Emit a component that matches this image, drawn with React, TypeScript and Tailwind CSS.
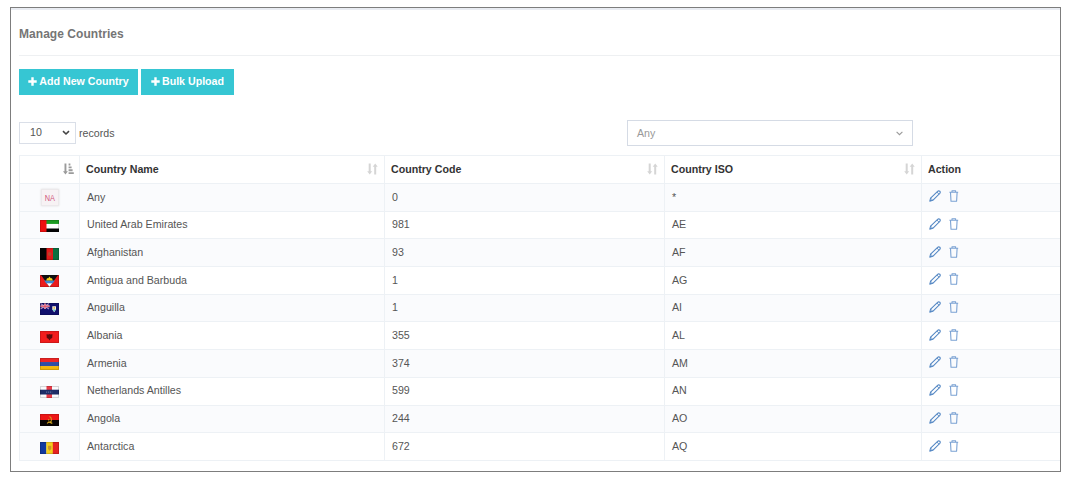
import type { ReactNode } from "react";

type Country = { flag: ReactNode; name: string; code: string; iso: string };

function Flag({ children }: { children: ReactNode }) {
  return (
    <svg width="19" height="12" viewBox="0 0 19 11" preserveAspectRatio="none" className="mt-[2px] block">
      {children}
      <rect x="0.5" y="0.5" width="18" height="10" fill="none" stroke="#000" strokeOpacity="0.15" />
    </svg>
  );
}

const countries: Country[] = [
  {
    flag: (
      <span className="mt-px flex h-[17px] w-[18px] items-center justify-center border border-[#ece9eb] bg-[#f7f2f4] text-[8.5px] leading-none text-[#d0527c] shadow-[0_0_2px_#e0dddf]">
        <span className="scale-x-[.86]">NA</span>
      </span>
    ),
    name: "Any",
    code: "0",
    iso: "*",
  },
  {
    flag: (
      <Flag>
        <rect width="19" height="4" fill="#1c9c22" />
        <rect y="3.6" width="19" height="4.4" fill="#fff" />
        <rect y="7.8" width="19" height="3.2" fill="#050505" />
        <rect width="6.5" height="11" fill="#f01010" />
      </Flag>
    ),
    name: "United Arab Emirates",
    code: "981",
    iso: "AE",
  },
  {
    flag: (
      <Flag>
        <rect width="7" height="11" fill="#050505" />
        <rect x="6.5" width="6.5" height="11" fill="#e01a1a" />
        <rect x="13" width="6" height="11" fill="#0c7040" />
        <circle cx="9.7" cy="5.5" r="1.8" fill="#b8442c" />
      </Flag>
    ),
    name: "Afghanistan",
    code: "93",
    iso: "AF",
  },
  {
    flag: (
      <Flag>
        <rect width="19" height="11" fill="#ec1c1c" />
        <path d="M1 0H18L9.5 11Z" fill="#111" />
        <path d="M4.2 5H14.8L12.5 8H6.5Z" fill="#3f86d2" />
        <path d="M6.8 7.6H12.2L9.5 11Z" fill="#fff" />
        <path d="M6.2 5L7 3L8.3 3L9.5 1.3L10.7 3L12 3L12.8 5Z" fill="#f5d51c" />
      </Flag>
    ),
    name: "Antigua and Barbuda",
    code: "1",
    iso: "AG",
  },
  {
    flag: (
      <Flag>
        <rect width="19" height="11" fill="#10106e" />
        <path d="M0.5 0.5L9 5.5M9 0.5L0.5 5.5" stroke="#b292c4" strokeWidth="1" />
        <path d="M5 0.5V5.5M0.5 3H9.5" stroke="#ecc9d6" strokeWidth="1.8" />
        <path d="M5 0.5V5.5M0.5 3H9.5" stroke="#e0455c" strokeWidth="1" />
        <path d="M12.3 3H16V6L14.2 8.5L12.3 6Z" fill="#f2f3df" />
        <path d="M12.6 6H15.7L14.2 8Z" fill="#54bdca" />
        <circle cx="14.2" cy="4.5" r="0.8" fill="#e5a83b" />
      </Flag>
    ),
    name: "Anguilla",
    code: "1",
    iso: "AI",
  },
  {
    flag: (
      <Flag>
        <rect width="19" height="11" fill="#f21d1d" />
        <path d="M6.5 3L8.5 3.2L9.5 2.7L10.5 3.2L12.5 3L12.2 6.5L10.6 7L9.5 8.7L8.4 7L6.8 6.5Z" fill="#5b0a0c" />
      </Flag>
    ),
    name: "Albania",
    code: "355",
    iso: "AL",
  },
  {
    flag: (
      <Flag>
        <rect width="19" height="4" fill="#ee2525" />
        <rect y="3.7" width="19" height="4" fill="#304ea6" />
        <rect y="7.4" width="19" height="3.6" fill="#f5b90c" />
      </Flag>
    ),
    name: "Armenia",
    code: "374",
    iso: "AM",
  },
  {
    flag: (
      <Flag>
        <rect width="19" height="11" fill="#fbfbfd" />
        <rect x="6.5" width="5.5" height="11" fill="#e93a46" />
        <rect y="3.4" width="19" height="4.4" fill="#1d2c66" />
        <path d="M6.2 5.6H12.4" stroke="#6c78a8" strokeDasharray="1 1" />
      </Flag>
    ),
    name: "Netherlands Antilles",
    code: "599",
    iso: "AN",
  },
  {
    flag: (
      <Flag>
        <rect width="19" height="5.5" fill="#ee1616" />
        <rect y="5.5" width="19" height="5.5" fill="#080404" />
        <path d="M9.5 2.3C12 3.3 12 6.5 10 8M7 8.6L9 7.3L12.3 8.6M8.7 4.5V6" fill="none" stroke="#d4a51c" strokeWidth="1" />
      </Flag>
    ),
    name: "Angola",
    code: "244",
    iso: "AO",
  },
  {
    flag: (
      <Flag>
        <rect width="6.5" height="11" fill="#12399f" />
        <rect x="6.3" width="6.7" height="11" fill="#f6cf1d" />
        <rect x="12.8" width="6.2" height="11" fill="#e62222" />
        <path d="M8 3.5H11.3V6.5L9.6 8L8 6.5Z" fill="#c9962c" />
      </Flag>
    ),
    name: "Antarctica",
    code: "672",
    iso: "AQ",
  },
];

function Plus() {
  return (
    <svg width="9" height="9" viewBox="0 0 9 9" className="-mt-px shrink-0">
      <path d="M4.5 0.3V8.7M0.3 4.5H8.7" stroke="currentColor" strokeWidth="2.4" />
    </svg>
  );
}

function SortBoth() {
  return (
    <svg width="11" height="12" viewBox="0 0 11 12" className="shrink-0 text-[#d5d5d5]" fill="currentColor">
      <path d="M1.7 0.5H3.7V8.3H5.2L2.7 11.5L0.2 8.3H1.7Z" />
      <path d="M7.2 11.5H9.2V3.7H10.7L8.2 0.5L5.7 3.7H7.2Z" />
    </svg>
  );
}

function SortAsc() {
  return (
    <svg width="11" height="12" viewBox="0 0 11 12" className="shrink-0 text-[#9b9b9b]" fill="currentColor">
      <path d="M1.5 0.5H3.4V8.3H4.9L2.45 11.4L0 8.3H1.5Z" />
      <path d="M5.6 0.6H7.4V2.5H5.6ZM5.6 3.4H8.6V5.3H5.6ZM5.6 6.3H9.6V8.2H5.6ZM5.6 9.2H10.8V11.1H5.6Z" />
    </svg>
  );
}

function Pencil() {
  return (
    <svg width="12" height="12" viewBox="0 0 12 12" fill="none" stroke="#5588c4" strokeWidth="1.1" strokeLinejoin="round">
      <path d="M0.8 11.1L1.6 8.2L8.6 1.3Q9.6 0.4 10.8 1.2Q11.7 2.3 10.8 3.4L3.8 10.3Z" />
      <path d="M7.9 2L10 4.2M1.6 8.2L3.8 10.3" strokeWidth="0.9" />
    </svg>
  );
}

function Trash() {
  return (
    <svg width="10" height="12" viewBox="0 0 10 12" fill="none" stroke="#7ba2d3" strokeWidth="1.1" strokeLinejoin="round">
      <path d="M0.4 2.3H9.2M3 2.1V0.8H6.6V2.1M1.5 2.5L2 11.3H7.6L8.1 2.5" />
    </svg>
  );
}

const row = "grid grid-cols-[60px_305px_280px_257px_1fr]";
const head = "flex items-center justify-between border-r border-[#edf1f5] pr-[6px] pl-[6px]";
const cell = "flex items-center border-r border-[#edf1f5] pb-px pl-[7px]";

export default function App() {
  return (
    <div className="h-[484px] w-[1067px] bg-white pt-[7px] pl-[10px] font-['Liberation_Sans',Arial,sans-serif] text-[10.65px] leading-none text-[#555]">
      <main className="h-[465px] w-[1051px] overflow-hidden border border-[#7d7d7d]">
        <div className="h-[2px] bg-[#e9ecf2]" />
        <div className="pl-[8px]">
          <h1 className="flex h-[46px] items-center border-b border-[#eef0f2] pt-[15px] pb-[12px] text-[12px] font-bold tracking-[0.05px] text-[#757575]">
            Manage Countries
          </h1>
          <div className="mt-[13px] flex h-[26px] gap-[3px] font-bold text-white">
            <button className="flex w-[119px] items-center justify-center gap-[2px] bg-[#36c6d3] pb-px">
              <Plus />
              Add New Country
            </button>
            <button className="flex w-[93px] items-center justify-center gap-[2px] bg-[#36c6d3] pb-px">
              <Plus />
              Bulk Upload
            </button>
          </div>
          <div className="mt-[25px] flex h-[26px] items-center">
            <div className="flex h-[22px] w-[57px] items-center justify-between border border-[#dadfe8] pr-[5px] pb-px pl-[10px]">
              10
              <svg width="8" height="6" viewBox="0 0 8 6" fill="none" stroke="#444" strokeWidth="1.6">
                <path d="M1 1.2L4 4L7 1.2" />
              </svg>
            </div>
            <div className="ml-[3px] w-[548px]">records</div>
            <div className="flex h-[26px] w-[286px] items-center justify-between border border-[#d5dbe5] pr-[9px] pl-[9px] text-[#999]">
              Any
              <svg width="7" height="5" viewBox="0 0 7 5" fill="none" stroke="#999" strokeWidth="1.1">
                <path d="M0.6 0.8L3.5 3.7L6.4 0.8" />
              </svg>
            </div>
          </div>
          <div className="mt-[9px] border-t border-l border-[#edf1f5]">
            <div className={`${row} h-[28px] border-b border-[#edf1f5] font-bold text-[#333]`}>
              <div className="flex items-center justify-end border-r border-[#edf1f5] pr-[5px] pb-px">
                <SortAsc />
              </div>
              <div className={`${head} pb-px`}>
                Country Name
                <SortBoth />
              </div>
              <div className={`${head} pb-px`}>
                Country Code
                <SortBoth />
              </div>
              <div className={`${head} pb-px`}>
                Country ISO
                <SortBoth />
              </div>
              <div className="flex items-center pb-px pl-[6px]">Action</div>
            </div>
            {countries.map((c) => (
              <div key={c.iso} className={`${row} h-[27.7px] border-b border-[#edf1f5] odd:bg-white even:bg-[#fafbfd]`}>
                <div className="flex items-center justify-center border-r border-[#edf1f5] bg-[#fafbfd]">{c.flag}</div>
                <div className={cell}>{c.name}</div>
                <div className={cell}>{c.code}</div>
                <div className={cell}>{c.iso}</div>
                <div className="flex items-center gap-[8px] pb-[2px] pl-[7px]">
                  <Pencil />
                  <Trash />
                </div>
              </div>
            ))}
          </div>
        </div>
      </main>
    </div>
  );
}
